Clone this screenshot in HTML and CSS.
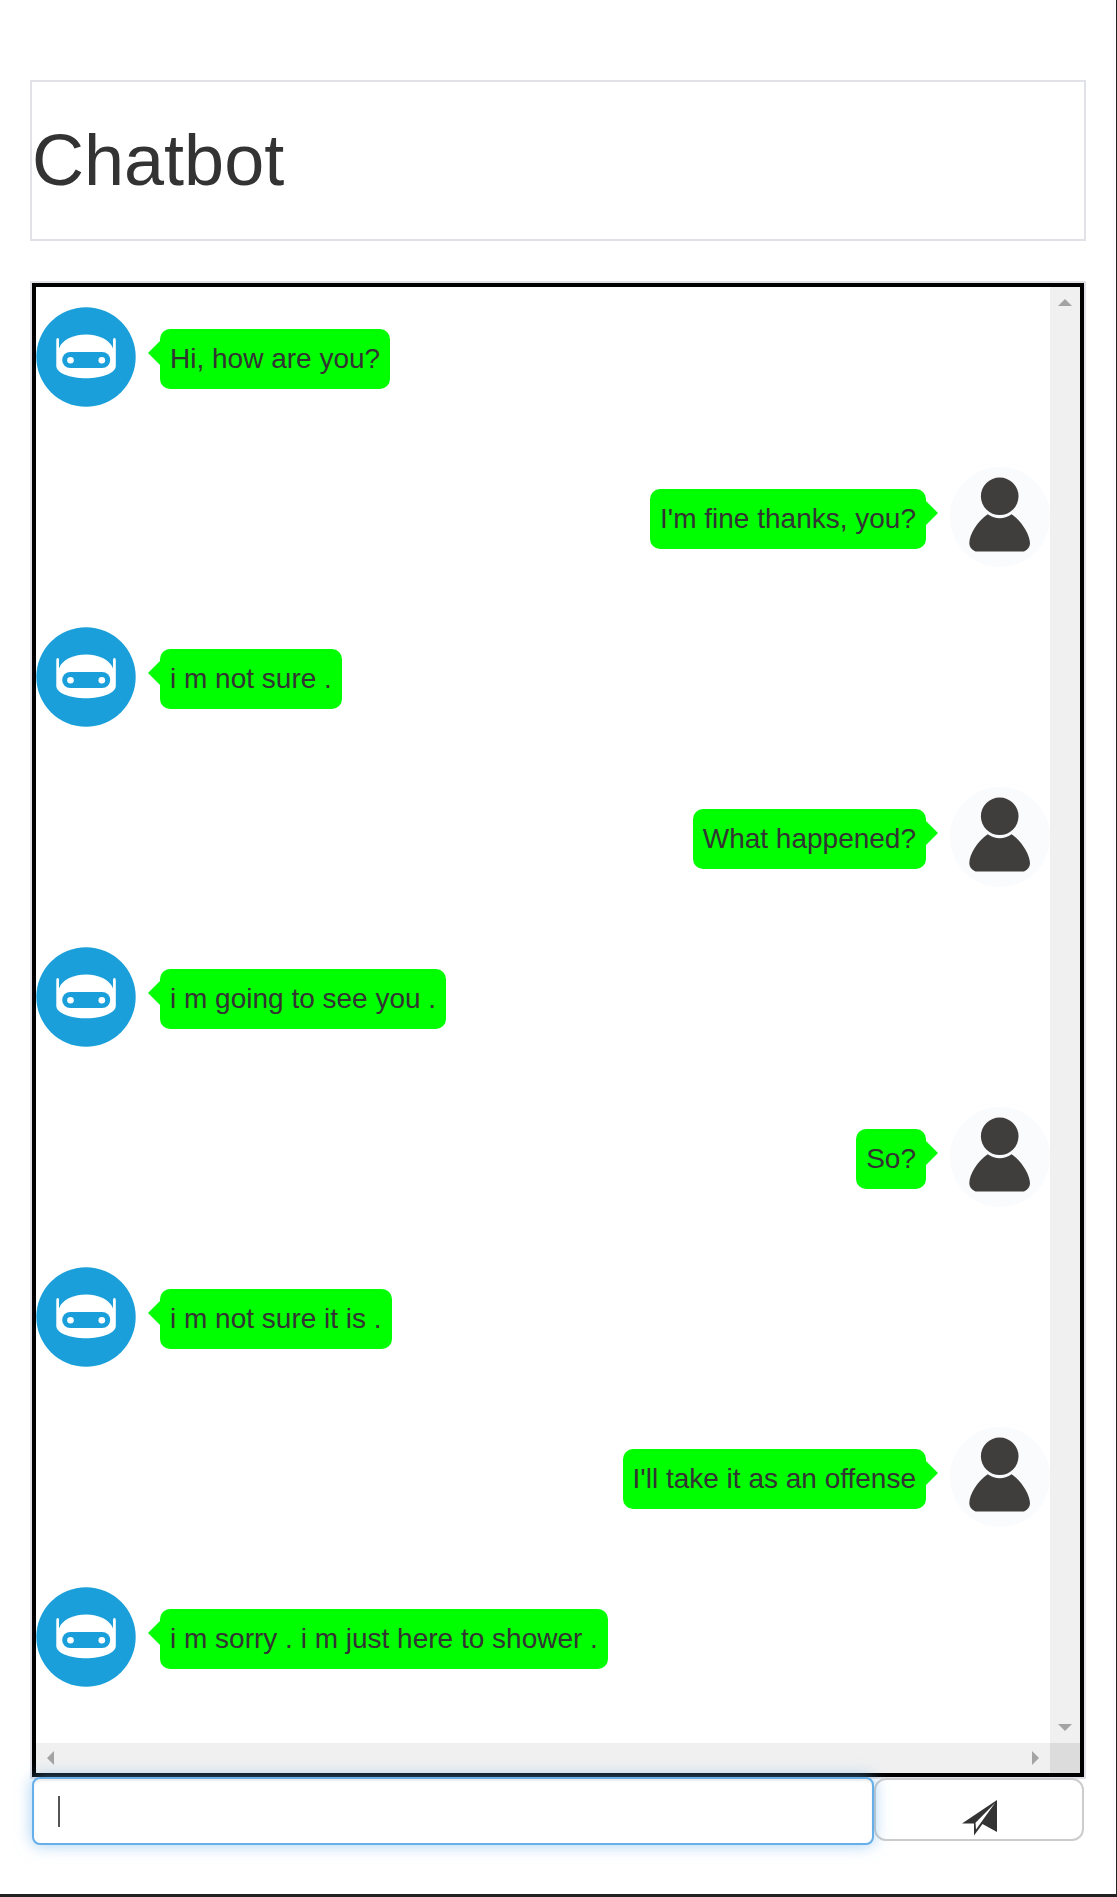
FILE: index.html
```html
<!DOCTYPE html>
<html lang="en">
<head>
<meta charset="utf-8">
<title>Chatbot</title>
<link rel="stylesheet" href="styles.css">
</head>
<body>
<svg class="defs" aria-hidden="true">
  <symbol id="bot" viewBox="0 0 100 100">
    <circle cx="50" cy="50" r="49.7" fill="#1a9fda"/>
    <path fill="#fff" d="M20.3 33Q20.3 31 21.7 31T23 33V41.5C26 33 37 27.600 50 27.600S74 33 77 41.500V33Q77 31 78.400 31T79.800 33V59C79.800 66 66 71.300 50 71.300S20.300 66 20.300 59Z"/>
    <rect x="26.200" y="45" width="48" height="16" rx="8" fill="#1a9fda"/>
    <circle cx="34.500" cy="53.300" r="3.300" fill="#fff"/>
    <circle cx="65.800" cy="53.300" r="3.300" fill="#fff"/>
  </symbol>
  <symbol id="user" viewBox="0 0 100 100">
    <circle cx="50" cy="50" r="50" fill="#fafbfd"/>
    <circle cx="49.700" cy="29.300" r="18.800" fill="#403e3c"/>
    <path fill="#403e3c" d="M37.700 47.200Q49.700 55.200 61.700 47.200C71 53.500 80 67 80 76.500Q79.700 82 74 84.600H25.500Q19.600 82 19.300 76.500C19.300 67 28 53.500 37.700 47.200Z"/>
  </symbol>
</svg>
<main class="page">
  <header class="title-box"><h1 class="title">Chatbot</h1></header>
  <section class="chat-frame">
    <div class="chat">
      <div class="messages">
        <div class="row"><svg class="avatar"><use href="#bot"/></svg><p class="bubble">Hi, how are you?</p></div>
        <div class="row user"><svg class="avatar"><use href="#user"/></svg><p class="bubble">I'm fine thanks, you?</p></div>
        <div class="row"><svg class="avatar"><use href="#bot"/></svg><p class="bubble">i m not sure .</p></div>
        <div class="row user"><svg class="avatar"><use href="#user"/></svg><p class="bubble">What happened?</p></div>
        <div class="row"><svg class="avatar"><use href="#bot"/></svg><p class="bubble">i m going to see you .</p></div>
        <div class="row user"><svg class="avatar"><use href="#user"/></svg><p class="bubble">So?</p></div>
        <div class="row"><svg class="avatar"><use href="#bot"/></svg><p class="bubble">i m not sure it is .</p></div>
        <div class="row user"><svg class="avatar"><use href="#user"/></svg><p class="bubble">I'll take it as an offense</p></div>
        <div class="row"><svg class="avatar"><use href="#bot"/></svg><p class="bubble">i m sorry . i m just here to shower .</p></div>
      </div>
      <div class="bar vertical">
        <svg width="30" height="30"><path d="M8 19L15 12L22 19Z"/></svg>
        <svg width="30" height="30"><path d="M8 11L15 18L22 11Z"/></svg>
      </div>
      <div class="bar horizontal">
        <svg width="30" height="30"><path d="M18 8L11 15L18 22Z"/></svg>
        <svg width="30" height="30"><path d="M12 8L19 15L12 22Z"/></svg>
      </div>
      <div class="corner"></div>
    </div>
  </section>
  <div class="composer">
    <div class="field" role="textbox"><span class="caret"></span></div>
    <button class="send" aria-label="Send">
      <svg class="plane" viewBox="0 0 36 36"><path d="M0 23.500L35 0V32L20.500 24L12 35.500V23.500Z"/><path class="fold" d="M13.500 22.800L33 3L14 29.500Z"/></svg>
    </button>
  </div>
</main>
</body>
</html>
```
FILE: styles.css
```css
* { box-sizing: border-box; }
body {
  margin: 0;
  background: #fff;
  color: #333;
  font: 28px/40px "Liberation Sans", Arial, sans-serif;
}
.defs { display: none; }
.page {
  height: 1897px;
  padding: 80px 30px 0;
  border-right: 1px solid #222;
  border-bottom: 3px solid #222;
}
.title-box {
  width: 1056px;
  height: 161px;
  border: 2px solid #e1e1e8;
  display: flex;
  align-items: center;
}
.title { margin: 0; font-size: 72px; font-weight: 400; line-height: 79px; }
.chat-frame {
  width: 1056px;
  height: 1498px;
  margin-top: 40px;
  border: 2px solid #e1e1e8;
}
.chat {
  height: 100%;
  border: 4px solid #000;
  display: grid;
  grid-template: 1456px 30px / 1014px 30px;
}
.messages { padding-top: 20px; }
.row { display: flex; gap: 24px; height: 160px; }
.row.user { flex-direction: row-reverse; }
.avatar { width: 100px; height: 100px; flex: none; }
.bubble {
  position: relative;
  height: 60px;
  margin: 22px 0 0;
  padding: 10px;
  border-radius: 10px;
  background: #0f0;
  white-space: nowrap;
}
.bubble::before {
  content: "";
  position: absolute;
  top: 12px;
  left: -12px;
  border: solid transparent;
  border-width: 12px 12px 12px 0;
  border-right-color: #0f0;
}
.user .bubble::before {
  left: auto;
  right: -12px;
  border-width: 12px 0 12px 12px;
  border-right-color: transparent;
  border-left-color: #0f0;
}
.bar { display: flex; justify-content: space-between; background: #f0f0f0; fill: #a3a3a3; }
.vertical { flex-direction: column; }
.corner { background: #dcdcdc; }
.composer { display: flex; width: 1052px; margin: -2px 0 0 2px; }
.field {
  position: relative;
  width: 842px;
  height: 68px;
  padding: 17px 24px;
  border: 2px solid #66afe9;
  border-radius: 8px;
  background: #fff;
  box-shadow: inset 0 2px 2px rgba(0, 0, 0, .075), 0 0 16px rgba(102, 175, 233, .6);
}
.caret { display: block; width: 2px; height: 31px; background: #555; }
.send {
  width: 210px;
  height: 63px;
  margin-top: 1px;
  padding: 0 0 0 2px;
  border: 2px solid #ccc;
  border-radius: 12px;
  background: #fff;
  display: flex;
  justify-content: center;
}
.plane { width: 36px; height: 36px; margin-top: 20px; fill: #333; }
.plane .fold { fill: #fff; }
```
